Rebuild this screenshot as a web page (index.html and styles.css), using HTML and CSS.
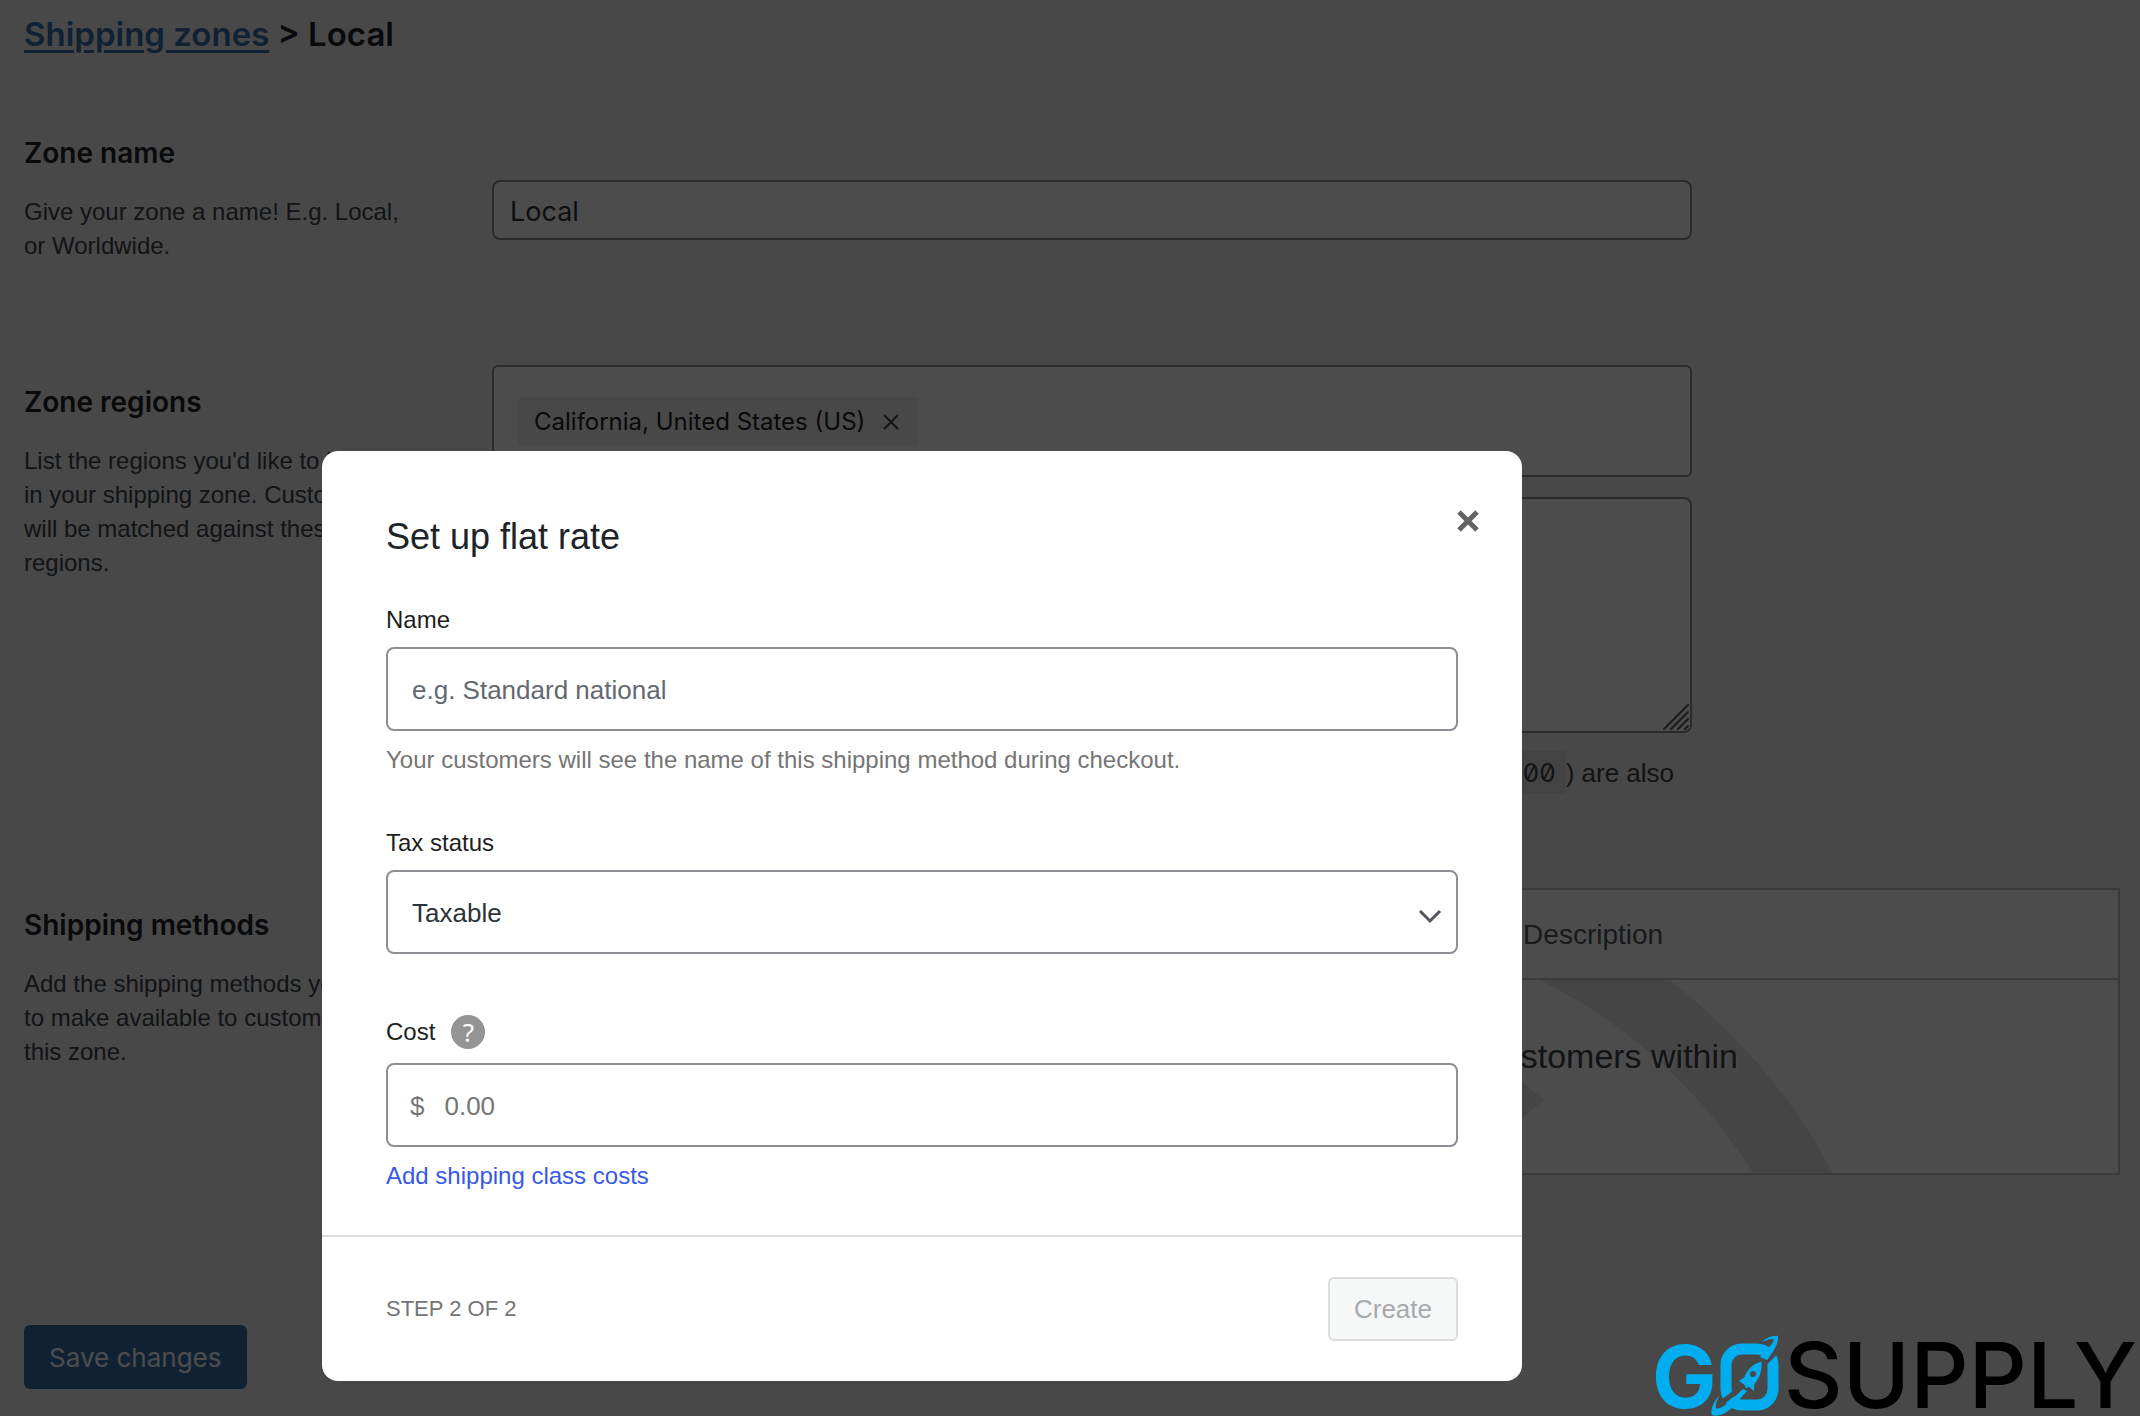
FILE: index.html
```html
<!DOCTYPE html>
<html lang="en">
<head>
<meta charset="utf-8">
<meta name="viewport" content="width=device-width, initial-scale=1">
<title>Shipping zones - Local</title>
<link rel="stylesheet" href="styles.css">
</head>
<body>
<main class="page">
  <h1 class="page-title"><a href="#zones">Shipping zones</a> &gt; Local</h1>

  <section class="row row-name">
    <div class="row-info">
      <h2><label for="zone-name">Zone name</label></h2>
      <p>Give your zone a name! E.g. Local, or Worldwide.</p>
    </div>
    <div class="row-field row-field-name">
      <input class="zone-input" id="zone-name" type="text" value="Local">
    </div>
  </section>

  <section class="row row-regions">
    <div class="row-info">
      <h2>Zone regions</h2>
      <p>List the regions you'd like to include in your shipping zone. Customers<br>will be matched against these<br>regions.</p>
    </div>
    <div class="row-field">
      <div class="region-box">
        <span class="chip">California, United States (US)
          <button class="chip-remove" type="button" aria-label="Remove California">
            <svg width="16" height="16" viewBox="0 0 16 16"><path d="M1 1L15 15M15 1L1 15" stroke="currentColor" stroke-width="2" fill="none"/></svg>
          </button>
        </span>
      </div>
      <div class="postcodes">
        <textarea class="postcode-area" aria-label="Postcodes"></textarea>
        <svg class="grip" width="26" height="26" viewBox="0 0 26 26"><path d="M1 25L25 1M8 25L25 8M15 25L25 15M22 25L25 22" stroke="#5c5c5c" stroke-width="2" stroke-linecap="round" fill="none"/></svg>
      </div>
      <p class="note">Postcodes containing wildcards (e.g. <code>CB23*</code>) or fully numeric ranges (e.g. <code>90210...99000</code>) are also</p>
    </div>
  </section>

  <section class="row">
    <div class="row-info">
      <h2>Shipping methods</h2>
      <p>Add the shipping methods you'd like to make available to customers within this zone.</p>
    </div>
    <table class="methods">
      <thead>
        <tr><th class="col-title">Title</th><th class="col-enabled">Enabled</th><th>Description</th></tr>
      </thead>
      <tbody>
        <tr>
          <td colspan="3">
            <div class="blank">
              <svg class="blank-art" viewBox="494 979 1624 193" preserveAspectRatio="xMidYMid slice" aria-hidden="true">
                <circle cx="1306" cy="1452" r="562" fill="none" stroke="#e6e6e6" stroke-width="69"/>
                <path d="M1544 1099L1440 1013V1185Z" fill="#e6e6e6"/>
              </svg>
              <p>You can add multiple shipping methods within this zone. Only customers within</p>
            </div>
          </td>
        </tr>
      </tbody>
    </table>
  </section>

  <button class="save" type="button">Save changes</button>
</main>

<div class="backdrop"></div>

<form class="modal" role="dialog" aria-labelledby="modal-title">
  <div class="modal-body">
    <header class="modal-head">
      <h2 id="modal-title">Set up flat rate</h2>
      <button class="close" type="button" aria-label="Close">
        <svg width="22" height="22" viewBox="0 0 22 22"><path d="M2 2L20 20M20 2L2 20" stroke="currentColor" stroke-width="5" fill="none"/></svg>
      </button>
    </header>

    <div class="field field-name">
      <label for="m-name">Name</label>
      <input class="control" id="m-name" type="text" placeholder="e.g. Standard national">
      <p class="help">Your customers will see the name of this shipping method during checkout.</p>
    </div>

    <div class="field field-tax">
      <label for="m-tax">Tax status</label>
      <div class="select-wrap">
        <select class="control" id="m-tax"><option>Taxable</option><option>None</option></select>
        <svg class="chevron" width="24" height="16" viewBox="0 0 24 16"><path d="M2 3L12 13L22 3" stroke="#50575e" stroke-width="3" fill="none"/></svg>
      </div>
    </div>

    <div class="field">
      <div class="label-line">
        <label for="m-cost">Cost</label>
        <span class="tip" title="Enter a cost">?</span>
      </div>
      <div class="control money">
        <span>$</span>
        <input id="m-cost" type="text" placeholder="0.00">
      </div>
      <a class="add-costs" href="#costs">Add shipping class costs</a>
    </div>
  </div>
  <footer class="modal-foot">
    <span>STEP 2 OF 2</span>
    <button class="create" type="button" disabled>Create</button>
  </footer>
</form>

<svg class="brand" width="500" height="96" viewBox="0 0 500 96" role="img" aria-label="GoSupply">
  <text class="brand-g" x="12" y="88">G</text>
  <g fill="#00aeef">
    <rect x="86" y="29" width="47" height="56" rx="16" fill="none" stroke="#00aeef" stroke-width="11"/>
    <path d="M80 84L106 64M124 44L142 26" stroke="#484848" stroke-width="5"/>
    <path d="M122 22C127 17 134 15 138 16C139 23 134 31 127 40L120 37L129 27C132 24 135 20 133 19C130 18 126 21 122 22Z"/>
    <path d="M80 75C73 82 70 91 72 95C78 98 88 92 93 87L107 71L103 69L90 81C84 87 77 90 76 88C75 85 77 80 80 75Z"/>
    <path d="M122 41C113 43 107 49 104 57L98 61L104 65L106 69L109 67L114 72L115 64C120 58 123 50 122 41Z" stroke="#484848" stroke-width="1"/>
  </g>
  <circle cx="113" cy="54" r="3" fill="#484848"/>
  <text class="brand-supply" x="144" y="88">SUPPLY</text>
</svg>
</body>
</html>
```
FILE: styles.css
```css
* { box-sizing: border-box; }

body {
  position: relative;
  min-height: 100vh;
  margin: 0;
  background: #f0f0f1;
  color: #3c434a;
  font-family: "Liberation Sans", Arial, sans-serif;
  font-size: 24px;
  line-height: 34px;
}

h1, h2, p { margin: 0; }
button, input, select, textarea { font: inherit; color: inherit; }
svg { display: block; }

/* Settings page */
.page { padding: 14px 20px 28px 24px; }

.page-title {
  margin-bottom: 62px;
  color: #1d2327;
  font: 600 33px/40px Inter, sans-serif;
}
.page-title a { color: #3870ab; text-underline-offset: 4px; text-decoration-thickness: 3px; }

.row { display: grid; grid-template-columns: 468px minmax(0, 1fr); }
.row-name { margin-bottom: 102px; }
.row-regions { margin-bottom: 55px; }

.row-info { padding-top: 20px; }
.row-info h2 {
  margin-bottom: 25px;
  color: #1d2327;
  font: 600 28px/34px Inter, sans-serif;
}
.row-info p { max-width: 402px; }
.row-field { max-width: 1200px; }
.row-field-name { padding-top: 64px; }

.zone-input {
  display: block;
  width: 100%;
  height: 60px;
  padding: 2px 16px 0;
  border: 2px solid #8c8f94;
  border-radius: 8px;
  background: #fff;
  color: #2c3338;
  font: 27px/34px Inter, sans-serif;
}

.region-box {
  height: 112px;
  padding: 30px 24px;
  border: 2px solid #8c8f94;
  border-radius: 6px;
  background: #fff;
}
.chip {
  display: inline-flex;
  align-items: center;
  gap: 14px;
  height: 48px;
  padding: 2px 16px 0;
  border-radius: 4px;
  background: #f0f0f0;
  color: #1e1e1e;
  font: 24px/34px Inter, sans-serif;
}
.chip-remove { padding: 4px; border: 0; background: none; color: #3c434a; }

.postcodes { position: relative; margin: 20px 0; }
.postcode-area {
  display: block;
  width: 100%;
  height: 236px;
  border: 2px solid #8c8f94;
  border-radius: 8px;
  background: #fff;
  resize: none;
}
.grip { position: absolute; right: 3px; bottom: 3px; }

.note { height: 80px; font-size: 26px; line-height: 40px; white-space: nowrap; }
.note code {
  padding: 6px 10px;
  background: #dfdfe0;
  font: 26px/30px Inter, monospace;
  font-feature-settings: "zero";
}

.methods {
  width: 100%;
  border-collapse: collapse;
  border: 2px solid #c3c4c7;
  background: #fff;
}
.methods th {
  height: 90px;
  padding: 2px 22px 0;
  border-bottom: 2px solid #c3c4c7;
  color: #50575e;
  font-size: 28px;
  font-weight: 400;
  text-align: left;
}
.methods .col-title { width: 36%; }
.methods .col-enabled { width: 26%; }
.methods td { padding: 0; }
.blank { position: relative; height: 193px; padding: 56px 380px 0 0; overflow: hidden; }
.blank-art { position: absolute; inset: 0; width: 100%; height: 100%; }
.blank p {
  position: relative;
  font-size: 34px;
  line-height: 40px;
  text-align: right;
  white-space: nowrap;
  text-shadow: 2px 2px 2px #fff;
}

.save {
  height: 64px;
  margin-top: 150px;
  padding: 2px 25px 0;
  border: 0;
  border-radius: 6px;
  background: #3870ab;
  color: #fff;
  font: 26px/34px Inter, sans-serif;
}

/* Dialog */
.backdrop { position: fixed; inset: 0; background: rgba(0, 0, 0, .7); }

.modal {
  position: absolute;
  top: 451px;
  left: 322px;
  width: 1200px;
  border-radius: 16px;
  background: #fff;
  color: #1e1e1e;
}
.modal-body { padding: 54px 64px 42px; }
.modal-head { display: flex; align-items: flex-start; justify-content: space-between; margin-bottom: 42px; }
.modal-head h2 {
  padding-top: 8px;
  color: #1d2327;
  font-size: 36px;
  font-weight: 400;
  line-height: 48px;
}
.close { margin-right: -26px; padding: 5px; border: 0; background: none; color: #646464; }

.field { display: flex; flex-direction: column; align-items: stretch; }
.field-name { margin-bottom: 49px; }
.field-tax { margin-bottom: 61px; }

.control {
  width: 100%;
  height: 84px;
  margin-top: 10px;
  padding: 2px 24px 0;
  border: 2px solid #8c8f94;
  border-radius: 8px;
  background: #fff;
  color: #2c3338;
  font-size: 26px;
}
.control::placeholder { color: #646970; opacity: 1; }
.help { margin-top: 12px; color: #757575; }
.select-wrap { position: relative; }
select.control { display: block; appearance: none; }
.chevron { position: absolute; right: 16px; bottom: 30px; }

.label-line { display: flex; align-items: center; gap: 16px; margin-bottom: 4px; }
.tip {
  width: 34px;
  height: 34px;
  border-radius: 50%;
  background: #949494;
  color: #fff;
  font: 26px/34px "Noto Sans", sans-serif;
  text-align: center;
}
.money { display: flex; align-items: center; gap: 20px; padding: 2px 22px 0; color: #757575; }
.money input { flex: 1; padding: 0; border: 0; outline: 0; }
.money input::placeholder { color: #757575; opacity: 1; }
.add-costs { align-self: flex-start; margin-top: 12px; color: #3858e9; text-decoration: none; }

.modal-foot {
  display: flex;
  align-items: center;
  justify-content: space-between;
  padding: 40px 64px;
  border-top: 2px solid #dcdcde;
  color: #757575;
  font-size: 22px;
}
.create {
  height: 64px;
  padding: 0 24px;
  border: 2px solid #dcdcde;
  border-radius: 6px;
  background: #f6f7f7;
  color: #a7aaad;
  font-size: 26px;
}

/* Brand mark */
.brand { position: fixed; right: 0; bottom: 0; }
.brand-g { fill: #00aeef; font: 700 86px Inter, sans-serif; }
.brand-supply { fill: #000; font: 500 91px Inter, sans-serif; }
```
